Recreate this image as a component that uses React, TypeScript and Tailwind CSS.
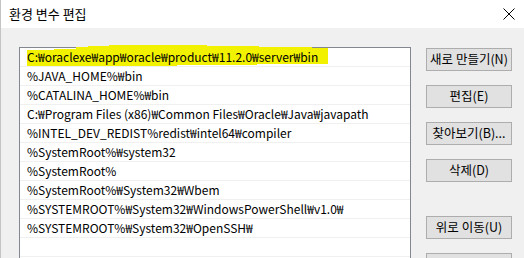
import React from 'react'

const paths = [
  'C:₩oraclexe₩app₩oracle₩product₩11.2.0₩server₩bin',
  '%JAVA_HOME%₩bin',
  '%CATALINA_HOME%₩bin',
  'C:₩Program Files (x86)₩Common Files₩Oracle₩Java₩javapath',
  '%INTEL_DEV_REDIST%redist₩intel64₩compiler',
  '%SystemRoot%₩system32',
  '%SystemRoot%',
  '%SystemRoot%₩System32₩Wbem',
  '%SYSTEMROOT%₩System32₩WindowsPowerShell₩v1.0₩',
  '%SYSTEMROOT%₩System32₩OpenSSH₩',
  '',
]

function WinButton({ label, className = '' }: { label: string; className?: string }) {
  return (
    <div
      className={`h-[23px] w-[86px] border border-[#adadad] bg-[#e1e1e1] flex items-center justify-center text-[12.5px] text-black ${className}`}
    >
      {label}
    </div>
  )
}

export default function App() {
  return (
    <div
      className="w-[524px] h-[258px] overflow-hidden bg-[#f0f0f0] border-l border-[#c4c4c4] flex flex-col"
      style={{ fontFamily: '"Noto Sans CJK KR", "Noto Sans", sans-serif' }}
    >
      {/* title bar */}
      <div className="h-[28px] bg-white flex items-center justify-between pl-[8px] pr-[8px] shrink-0">
        <span className="text-[13px] text-black">환경 변수 편집</span>
        <svg width="12" height="12" viewBox="0 0 12 12" className="mr-[1px]">
          <path d="M0.5 0.5 L11.5 11.5 M11.5 0.5 L0.5 11.5" stroke="#000" strokeWidth="1" />
        </svg>
      </div>

      <div className="flex flex-1 pt-[19px] pl-[18px]">
        {/* list */}
        <div className="relative w-[392px] h-[260px] border border-[#828790] bg-white shrink-0">
          <svg
            className="absolute left-[7px] top-[-3px]"
            width="304"
            height="22"
            viewBox="0 0 304 22"
          >
            <polygon
              points="0,5 27,5 27,4 49,4 49,2 61,2 61,1 82,1 82,0 180,0 180,1 232,1 232,2 285,2 285,3 301,3 301,19 230,19 230,20 150,20 150,21 60,21 60,22 0,22"
              fill="#f2f200"
            />
          </svg>
          {paths.map((p, i) => (
            <div
              key={i}
              className="relative h-[19px] border-b border-[#f0f0f0] pl-[7px] flex items-center text-[12px] leading-none text-black whitespace-nowrap"
            >
              {p}
            </div>
          ))}
        </div>

        {/* buttons */}
        <div className="flex flex-col pl-[15px] pt-[1px]">
          <WinButton label="새로 만들기(N)" />
          <WinButton label="편집(E)" className="mt-[14px]" />
          <WinButton label="찾아보기(B)..." className="mt-[14px]" />
          <WinButton label="삭제(D)" className="mt-[14px]" />
          <WinButton label="위로 이동(U)" className="mt-[34px]" />
          <WinButton label="" className="mt-[14px]" />
        </div>
      </div>
    </div>
  )
}
